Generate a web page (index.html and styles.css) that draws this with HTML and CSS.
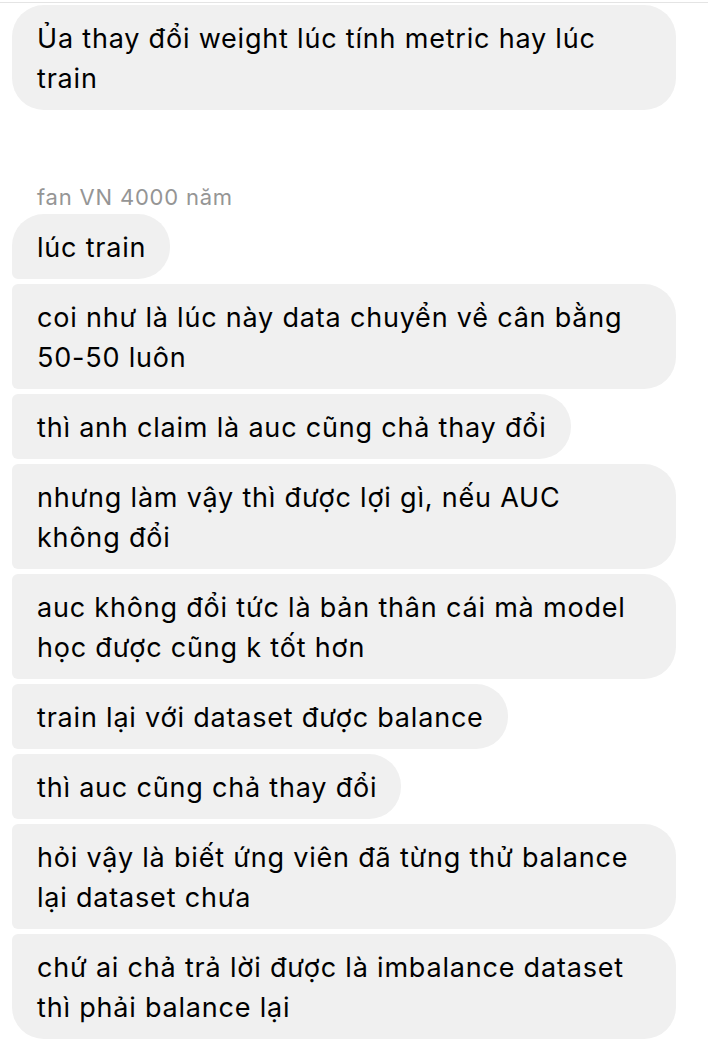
FILE: index.html
```html
<!DOCTYPE html>
<html lang="vi">
<head>
<meta charset="utf-8">
<link rel="stylesheet" href="styles.css">
</head>
<body>
<div class="topline"></div>
<div class="chat">
  <div class="msg wide solo">Ủa thay đổi weight lúc tính metric hay lúc<br>train</div>

  <div class="sender">fan VN 4000 năm</div>
  <div class="group">
    <div class="msg first">lúc train</div>
    <div class="msg wide">coi như là lúc này data chuyển về cân bằng<br>50-50 luôn</div>
    <div class="msg">thì anh claim là auc cũng chả thay đổi</div>
    <div class="msg wide">nhưng làm vậy thì được lợi gì, nếu AUC<br>không đổi</div>
    <div class="msg wide">auc không đổi tức là bản thân cái mà model<br>học được cũng k tốt hơn</div>
    <div class="msg">train lại với dataset được balance</div>
    <div class="msg">thì auc cũng chả thay đổi</div>
    <div class="msg wide">hỏi vậy là biết ứng viên đã từng thử balance<br>lại dataset chưa</div>
    <div class="msg wide last">chứ ai chả trả lời được là imbalance dataset<br>thì phải balance lại</div>
  </div>
</div>
</body>
</html>
```
FILE: styles.css
```css
html, body {
  margin: 0;
  padding: 0;
  background: #ffffff;
}
body {
  font-family: Inter, "Noto Sans", "Liberation Sans", sans-serif;
  color: #000;
}
.topline {
  height: 2px;
  border-bottom: 1px solid #e4e4e4;
}
.chat {
  display: flex;
  flex-direction: column;
  align-items: flex-start;
  padding: 2px 12px 0 12px;
}
.group {
  display: flex;
  flex-direction: column;
  align-items: flex-start;
  gap: 5px;
}
.msg {
  background: #f0f0f0;
  font-size: 27px;
  letter-spacing: 0.8px;
  line-height: 40px;
  padding: 14px 24px 11px 25px;
  border-radius: 6px 32px 32px 6px;
  white-space: nowrap;
  box-sizing: border-box;
}
.msg.wide {
  width: 664px;
}
.msg.solo {
  border-radius: 32px;
}
.msg.first {
  border-top-left-radius: 32px;
}
.msg.last {
  border-bottom-left-radius: 32px;
}
.sender {
  margin: 74px 0 4px 25px;
  font-size: 22px;
  letter-spacing: 0.8px;
  line-height: 26px;
  color: #959595;
}
```
